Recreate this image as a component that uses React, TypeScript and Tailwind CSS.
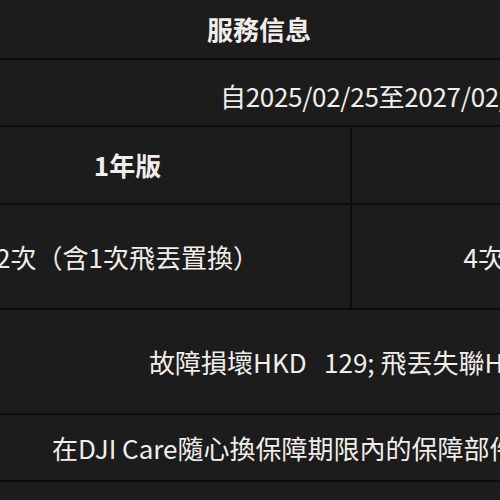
const rowBorder = "border-b-2 border-[#0e0d0e]"

export default function App() {
  return (
    <div className="w-[500px] h-[500px] overflow-hidden bg-[#1d1c1d] text-[#f1eee9] text-[26px] leading-none font-['Noto_Sans_CJK_TC','Noto_Sans',sans-serif]">
      <div className="w-[933px] -ml-[95px]">
        {/* header */}
        <div className={`h-[60px] flex items-center pl-[302px] font-bold ${rowBorder}`}>服務信息</div>

        {/* period */}
        <div className={`h-[67px] flex items-center pl-[315px] pt-[6px] whitespace-nowrap tracking-[-0.3px] ${rowBorder}`}>
          自2025/02/25至2027/02/25
        </div>

        {/* versions */}
        <div className={`h-[78px] grid grid-cols-[447px_1fr] ${rowBorder}`}>
          <div className="flex items-center justify-center font-bold border-r-2 border-[#0e0d0e]">1年版</div>
          <div className="flex items-center justify-center font-bold">2年版</div>
        </div>

        {/* replacements */}
        <div className={`h-[105px] grid grid-cols-[447px_1fr] ${rowBorder}`}>
          <div className="flex items-center justify-center whitespace-nowrap border-r-2 border-[#0e0d0e]">
            2次（含1次飛丟置換）
          </div>
          <div className="flex items-center justify-center whitespace-nowrap">4次（含2次飛丟置換）</div>
        </div>

        {/* fees */}
        <div className={`h-[105px] flex items-center pl-[244px] whitespace-pre ${rowBorder}`}>
          故障損壞HKD   129; 飛丟失聯HKD   299
        </div>

        {/* coverage note */}
        <div className={`h-[67px] flex items-center pl-[147px] whitespace-nowrap ${rowBorder}`}>
          在DJI Care隨心換保障期限內的保障部件發生故障
        </div>

        <div className="h-[67px] flex items-center pl-[200px] whitespace-nowrap">&nbsp;</div>
      </div>
    </div>
  )
}
